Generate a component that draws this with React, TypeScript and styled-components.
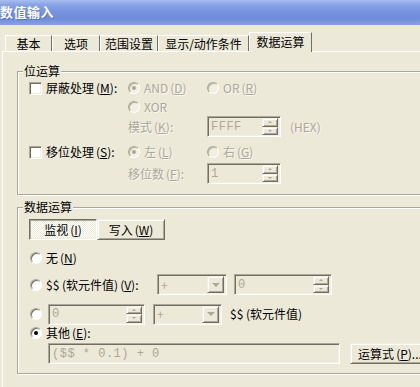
import React from 'react';
import styled, { createGlobalStyle } from 'styled-components';

const GlobalStyle = createGlobalStyle`
  html, body {
    margin: 0;
    padding: 0;
    background: #ece9d8;
  }
  body {
    font-family: "Noto Sans CJK SC", "Liberation Sans", sans-serif;
    font-size: 12px;
  }
`;

const Window = styled.div`
  width: 420px;
  height: 387px;
  overflow: hidden;
  background: #ece9d8;
  display: flex;
  flex-direction: column;
  color: #000;
  line-height: 14px;
`;

const TitleBar = styled.div`
  flex: none;
  height: 25px;
  display: flex;
  align-items: center;
  background: linear-gradient(to bottom, #a9bdf0 0%, #8aa5e6 18%, #7894de 45%, #6f8cdb 75%, #88a2e3 100%);
  color: #fff;
  font-weight: bold;
  font-size: 13px;
  letter-spacing: 0.5px;
  text-shadow: 1px 1px 0 rgba(60, 80, 160, 0.5);
  padding-bottom: 1px;
  box-sizing: border-box;
`;

const TabStrip = styled.div`
  flex: none;
  display: flex;
  align-items: flex-end;
  margin-top: 7px;
  padding-left: 5px;
  height: 19px;
  position: relative;
  z-index: 1;
`;

const Tab = styled.div<{ $w: number; $active?: boolean }>`
  box-sizing: border-box;
  width: ${p => p.$w}px;
  height: ${p => (p.$active ? 20 : 16)}px;
  margin-bottom: ${p => (p.$active ? -1 : 0)}px;
  border-top: 1px solid #fff;
  border-left: 1px solid #fff;
  border-right: 1px solid #716f64;
  background: #ece9d8;
  display: flex;
  align-items: center;
  justify-content: center;
  padding-bottom: ${p => (p.$active ? 2 : 0)}px;
`;

const Panel = styled.div`
  flex: 1;
  margin-left: 2px;
  border-top: 1px solid #fff;
  border-left: 1px solid #fff;
  padding: 19px 0 0 14px;
  display: flex;
  flex-direction: column;
`;

const GroupBox = styled.div<{ $h: number; $mt?: number }>`
  position: relative;
  box-sizing: border-box;
  width: 440px;
  height: ${p => p.$h}px;
  margin-top: ${p => p.$mt ?? 0}px;
  border: 1px solid #aca899;
  box-shadow: inset 1px 1px 0 #fff, 1px 1px 0 #fff;
  padding-left: 11px;
  display: flex;
  flex-direction: column;
`;

const Legend = styled.span`
  position: absolute;
  top: -8px;
  left: 5px;
  padding: 0 1px;
  background: #ece9d8;
  line-height: 14px;
`;

const Row = styled.div<{ $h: number; $mt: number }>`
  display: flex;
  align-items: center;
  height: ${p => p.$h}px;
  margin-top: ${p => p.$mt}px;
`;

const Cell = styled.div<{ $w?: number; $ml?: number }>`
  display: flex;
  align-items: center;
  gap: 4px;
  flex: none;
  width: ${p => (p.$w ? `${p.$w}px` : 'auto')};
  margin-left: ${p => p.$ml ?? 0}px;
  white-space: nowrap;
`;

const Text = styled.span<{ $off?: boolean }>`
  color: ${p => (p.$off ? '#aca899' : '#000')};
  text-shadow: ${p => (p.$off ? '1px 1px 0 rgba(255,255,255,0.7)' : 'none')};
  white-space: nowrap;
`;

const Paren = styled.span`
  margin-left: 2px;
  & u {
    text-decoration-thickness: 1px;
    text-underline-offset: 1px;
  }
`;

const CheckBox = styled.span`
  box-sizing: border-box;
  width: 13px;
  height: 13px;
  flex: none;
  background: #fff;
  border: 1px solid;
  border-color: #aca899 #fff #fff #aca899;
  box-shadow: inset 1px 1px 0 #716f64, inset -1px -1px 0 #f1efe2;
`;

const RadioCircle = styled.span<{ $checked?: boolean; $off?: boolean }>`
  box-sizing: border-box;
  width: 12px;
  height: 12px;
  flex: none;
  border-radius: 50%;
  border: 1px solid;
  border-color: #aca899 #fff #fff #aca899;
  background: ${p => (p.$off ? '#f1efe2' : '#fff')};
  box-shadow: inset 1px 1px 0 ${p => (p.$off ? '#b8b4a6' : '#716f64')};
  display: flex;
  align-items: center;
  justify-content: center;

  &::after {
    content: '';
    display: ${p => (p.$checked ? 'block' : 'none')};
    width: 4px;
    height: 4px;
    border-radius: 50%;
    background: ${p => (p.$off ? '#aca899' : '#000')};
  }
`;

const Sunken = styled.div<{ $w: number; $h?: number }>`
  box-sizing: border-box;
  flex: none;
  width: ${p => p.$w}px;
  height: ${p => p.$h ?? 21}px;
  border: 1px solid;
  border-color: #aca899 #fff #fff #aca899;
  box-shadow: inset 1px 1px 0 #716f64, inset -1px -1px 0 #f1efe2;
  background: #ece9d8;
  color: #aca899;
  display: flex;
  align-items: center;
  padding: 0 2px 0 3px;
`;

const FieldText = styled.span<{ $mono?: boolean }>`
  flex: 1;
  color: #aca899;
  font-family: ${p => (p.$mono ? '"Liberation Mono", "Noto Sans CJK SC", monospace' : 'inherit')};
  letter-spacing: ${p => (p.$mono ? '0.5px' : '0')};
  white-space: nowrap;
`;

const raised = `
  box-sizing: border-box;
  border: 1px solid;
  border-color: #f1efe2 #716f64 #716f64 #f1efe2;
  box-shadow: inset 1px 1px 0 #fff, inset -1px -1px 0 #aca899;
  background: #ece9d8;
`;

const SpinStack = styled.div`
  display: flex;
  flex-direction: column;
  width: 16px;
  height: 17px;
  flex: none;
`;

const SpinBtn = styled.div`
  ${raised}
  flex: 1;
  display: flex;
  align-items: center;
  justify-content: center;
`;

const Arrow = styled.span<{ $up?: boolean; $size?: number }>`
  width: 0;
  height: 0;
  border-left: ${p => p.$size ?? 2}px solid transparent;
  border-right: ${p => p.$size ?? 2}px solid transparent;
  ${p =>
    p.$up
      ? `border-bottom: ${p.$size ?? 2}px solid #aca899;`
      : `border-top: ${p.$size ?? 2}px solid #aca899;`}
`;

const DropBtn = styled.div`
  ${raised}
  width: 17px;
  height: 17px;
  flex: none;
  display: flex;
  align-items: center;
  justify-content: center;
`;

const PushButton = styled.div<{ $w: number; $pressed?: boolean }>`
  box-sizing: border-box;
  width: ${p => p.$w}px;
  height: 21px;
  flex: none;
  display: flex;
  align-items: center;
  justify-content: center;
  border: 1px solid;
  border-color: ${p => (p.$pressed ? '#716f64 #fff #fff #716f64' : '#f1efe2 #716f64 #716f64 #f1efe2')};
  box-shadow: ${p =>
    p.$pressed ? 'inset 1px 1px 0 #aca899, inset -1px -1px 0 #f1efe2' : 'inset 1px 1px 0 #fff, inset -1px -1px 0 #aca899'};
  background: ${p =>
    p.$pressed ? 'repeating-conic-gradient(#fff 0 25%, #ece9d8 0 50%) 0 0 / 2px 2px' : '#ece9d8'};
  white-space: nowrap;
`;

const Mn = ({ k }: { k: string }) => (
  <Paren>
    (<u>{k}</u>)
  </Paren>
);

const Radio = ({ checked, off, children }: { checked?: boolean; off?: boolean; children: React.ReactNode }) => (
  <>
    <RadioCircle $checked={checked} $off={off} />
    <Text $off={off}>{children}</Text>
  </>
);

const Spin = ({ w, value }: { w: number; value: string }) => (
  <Sunken $w={w}>
    <FieldText $mono>{value}</FieldText>
    <SpinStack>
      <SpinBtn>
        <Arrow $up />
      </SpinBtn>
      <SpinBtn>
        <Arrow />
      </SpinBtn>
    </SpinStack>
  </Sunken>
);

const Combo = ({ w, value }: { w: number; value: string }) => (
  <Sunken $w={w}>
    <FieldText>{value}</FieldText>
    <DropBtn>
      <Arrow $size={4} />
    </DropBtn>
  </Sunken>
);

const TABS = [
  { label: '基本', w: 47 },
  { label: '选项', w: 48 },
  { label: '范围设置', w: 58 },
  { label: '显示/动作条件', w: 91 },
  { label: '数据运算', w: 63, active: true },
];

export default function App() {
  return (
    <>
      <GlobalStyle />
      <Window>
        <TitleBar>数值输入</TitleBar>

        <TabStrip>
          {TABS.map(t => (
            <Tab key={t.label} $w={t.w} $active={t.active}>
              {t.label}
            </Tab>
          ))}
        </TabStrip>

        <Panel>
          <GroupBox $h={124}>
            <Legend>位运算</Legend>

            <Row $h={16} $mt={8}>
              <Cell $w={99}>
                <CheckBox />
                <Text>
                  屏蔽处理<Mn k="M" />:
                </Text>
              </Cell>
              <Cell $w={79}>
                <Radio checked off>
                  AND<Mn k="D" />
                </Radio>
              </Cell>
              <Cell>
                <Radio off>
                  OR<Mn k="R" />
                </Radio>
              </Cell>
            </Row>

            <Row $h={16} $mt={3}>
              <Cell $w={99} />
              <Cell>
                <Radio off>XOR</Radio>
              </Cell>
            </Row>

            <Row $h={21} $mt={1}>
              <Cell $w={99} />
              <Cell $w={79}>
                <Text $off>
                  模式<Mn k="K" />:
                </Text>
              </Cell>
              <Spin w={74} value="FFFF" />
              <Cell $ml={9}>
                <Text $off>(HEX)</Text>
              </Cell>
            </Row>

            <Row $h={16} $mt={7}>
              <Cell $w={99}>
                <CheckBox />
                <Text>
                  移位处理<Mn k="S" />:
                </Text>
              </Cell>
              <Cell $w={79}>
                <Radio checked off>
                  左<Mn k="L" />
                </Radio>
              </Cell>
              <Cell>
                <Radio off>
                  右<Mn k="G" />
                </Radio>
              </Cell>
            </Row>

            <Row $h={21} $mt={3}>
              <Cell $w={99} />
              <Cell $w={79}>
                <Text $off>
                  移位数<Mn k="F" />:
                </Text>
              </Cell>
              <Spin w={74} value="1" />
            </Row>
          </GroupBox>

          <GroupBox $h={167} $mt={12}>
            <Legend>数据运算</Legend>

            <Row $h={21} $mt={11}>
              <PushButton $w={68} $pressed>
                监视<Mn k="I" />
              </PushButton>
              <PushButton $w={68}>
                写入<Mn k="W" />
              </PushButton>
            </Row>

            <Row $h={16} $mt={10}>
              <Cell $ml={1}>
                <Radio>
                  无<Mn k="N" />
                </Radio>
              </Cell>
            </Row>

            <Row $h={21} $mt={8}>
              <Cell $w={127} $ml={1}>
                <Radio>
                  $$ (软元件值)<Mn k="V" />:
                </Radio>
              </Cell>
              <Combo w={70} value="+" />
              <Cell $ml={7}>
                <Spin w={98} value="0" />
              </Cell>
            </Row>

            <Row $h={20} $mt={9}>
              <Cell $w={18} $ml={1}>
                <RadioCircle />
              </Cell>
              <Spin w={97} value="0" />
              <Cell $ml={8}>
                <Combo w={69} value="+" />
              </Cell>
              <Cell $ml={8}>
                <Text>$$ (软元件值)</Text>
              </Cell>
            </Row>

            <Row $h={16} $mt={1}>
              <Cell $ml={1}>
                <Radio checked>
                  其他<Mn k="E" />:
                </Radio>
              </Cell>
            </Row>

            <Row $h={21} $mt={2}>
              <Cell $ml={19}>
                <Sunken $w={292}>
                  <FieldText $mono>($$ * 0.1) + 0</FieldText>
                </Sunken>
              </Cell>
              <Cell $ml={10}>
                <PushButton $w={80}>
                  运算式<Mn k="P" />...
                </PushButton>
              </Cell>
            </Row>
          </GroupBox>
        </Panel>
      </Window>
    </>
  );
}
